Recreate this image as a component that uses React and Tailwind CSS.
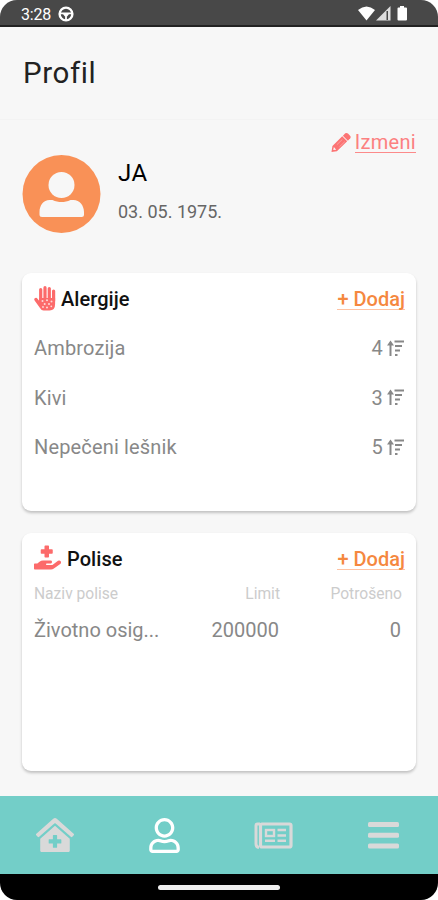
import { FaHandHoldingMedical, FaClinicMedical, FaRegUser } from 'react-icons/fa';

const allergies = [
  { name: 'Ambrozija', level: 4 },
  { name: 'Kivi', level: 3 },
  { name: 'Nepečeni lešnik', level: 5 },
];

const policies = [
  { name: 'Životno osig...', limit: 200000, spent: 0 },
];

function SortIcon() {
  return (
    <svg width="17" height="17" viewBox="0 0 17 17" fill="none" stroke="currentColor" strokeWidth="1.8">
      <path d="M3.5 16V3" strokeWidth="2" />
      <path d="M0 5.500 L3.500 .5 L7 5.500Z" fill="currentColor" stroke="none" />
      <path d="M7.500 1.500h9.500M8 6h7M8 10.500h5M8 15h2.500" />
    </svg>
  );
}

function PencilIcon() {
  return (
    <svg className="mr-[4px]" width="20" height="21" viewBox="0 0 21 21" fill="currentColor">
      <path fillRule="evenodd" d="M11.800 4 17 9.200 6.200 19.600.5 20.500 1.500 14.300ZM3 15.300 2.400 18.500 5.500 18.100Z" />
      <path d="M12.500 3.400 15 .9q1.400-1 2.800.2l2.200 2.200q1.300 1.400.2 2.800l-2.500 2.500Z" />
      <path d="M6.200 12.800 12 7.200M8.800 15.100l5.700-5.500" fill="none" stroke="#f7f7f7" strokeWidth=".6" opacity=".6" />
    </svg>
  );
}

function HandIcon() {
  return (
    <svg className="mr-[5px] mb-[2px]" width="22" height="25" viewBox="0 0 22 25">
      <g fill="none" stroke="#fc6b6b" strokeWidth="3.200" strokeLinecap="round">
        <path d="M6.700 3.500V15M11 1.700V15M15.300 2.500V15M19.600 5V15" />
      </g>
      <path d="M5.200 12H21.100v6q0 6.500-5.500 6.500H9.500Q7.500 24.500 6 22L.6 14.500q-1-1.700.7-2.500 1.300-.5 2.200.7l1.800 2.300Z" fill="#fc6b6b" />
      <g fill="#fff" opacity=".75">
        <circle cx="8.500" cy="15" r="1" />
        <circle cx="13" cy="14.300" r="1" />
        <circle cx="17.500" cy="15.500" r="1" />
        <circle cx="10.700" cy="18" r="1" />
        <circle cx="15" cy="18" r="1" />
        <circle cx="9" cy="21" r=".9" />
        <circle cx="13" cy="21.500" r="1" />
        <circle cx="17.300" cy="20.300" r=".9" />
      </g>
    </svg>
  );
}

function NewsIcon() {
  return (
    <svg width="39" height="27" viewBox="0 0 39 27" fill="none" stroke="currentColor">
      <path d="M6 2H3.500Q2 2 2 3.500V22q0 3 3 3.500" strokeWidth="3" />
      <rect x="6.500" y="2" width="30.500" height="23" rx="1.500" strokeWidth="3.200" />
      <rect x="12" y="8" width="8" height="6" strokeWidth="2.400" />
      <path d="M23.500 8h8.500M23.500 13.500h8.500M11 18.800h10M23.500 18.800h8.500" strokeWidth="2.600" />
    </svg>
  );
}

function MenuIcon() {
  return (
    <svg width="31" height="27" viewBox="0 0 31 27" fill="currentColor">
      <rect width="31" height="5" rx="1.500" />
      <rect y="10.700" width="31" height="5" rx="1.500" />
      <rect y="21.400" width="31" height="5" rx="1.500" />
    </svg>
  );
}

function StatusBar() {
  return (
    <div className="flex h-[27px] shrink-0 items-center border-b-2 border-[#222] bg-[#484848] pr-[30px] pl-[21px] text-white">
      <span className="pt-[4px] text-[16px] leading-none tracking-[-0.2px]">3:28</span>
      <svg className="mt-[2px] ml-[7px]" width="16" height="16" viewBox="0 0 16 16" fill="none" stroke="#fff">
        <circle cx="8" cy="8" r="6.4" strokeWidth="2.4" />
        <path d="M2 7.3h12M8 8v6M5.5 7.5 8 10.3l2.5-2.8" strokeWidth="1.8" />
      </svg>
      <svg className="mt-[2px] ml-auto" width="50" height="17" viewBox="0 0 50 17" fill="#fff">
        <path d="M0 5Q8.500-2 17 5L8.500 15.500Z" />
        <path d="M32.500 1v14.500H18Z" fill="#ddd" />
        <path d="M28.500 6h1.500v9h-1.500z" fill="#484848" />
        <path d="M40 2.500h2V1h4v1.500h2q1 0 1 1V14.500q0 1-1 1h-7.500q-1 0-1-1V3.500q0-1 1-1Z" />
      </svg>
    </div>
  );
}

function Avatar() {
  return (
    <svg width="79" height="78" viewBox="0 0 78 78" className="shrink-0">
      <circle cx="39" cy="39" r="39" fill="#f99157" />
      <g fill="#f7f7f7">
        <circle cx="39" cy="30" r="13" />
        <path d="M27 45h3c6 2.700 12 2.700 18 0h3c6 0 10.500 5.500 10.500 12v2.500q0 2.500-2.500 2.500H19.500q-2.500 0-2.500-2.500V57c0-6.500 4-12 10-12Z" />
      </g>
    </svg>
  );
}

function CardHeader({ icon, title }) {
  return (
    <div className="flex h-[50px] items-center pt-[2px]">
      {icon}
      <h2 className="text-[20px] font-medium tracking-[0.05px] text-[#111]">{title}</h2>
      <button className="mr-[-1px] ml-auto border-b border-[#ffc3a3] text-[20px] leading-[20px] font-medium text-[#f5883f]">+ Dodaj</button>
    </div>
  );
}

export default function App() {
  return (
    <div className="h-[900px] w-[438px] bg-white font-[Roboto,sans-serif]">
      <div className="flex h-full flex-col overflow-hidden rounded-[17px] bg-[#f7f7f7]">
        <StatusBar />

        <header className="flex h-[93px] shrink-0 items-center border-b border-[#f3f3f3] pl-[23px]">
          <h1 className="text-[29.5px] tracking-[0.6px] text-[#222]">Profil</h1>
        </header>

        <main className="flex flex-1 flex-col px-[22px]">
          <div className="mt-[9px] flex h-[26px] items-center justify-end text-[#fc7474]">
            <PencilIcon />
            <a className="border-b border-[#fc8a8a] text-[20px] leading-[20px] tracking-[0.3px] text-[#fc8080]">Izmeni</a>
          </div>

          <section className="flex h-[78px] gap-[17px]">
            <Avatar />
            <div className="pt-[3px]">
              <p className="text-[24px] leading-[30px] tracking-[0.4px] text-black">JA</p>
              <p className="mt-[12px] text-[18px] leading-[24px] text-[#666]">03. 05. 1975.</p>
            </div>
          </section>

          {/* Allergies */}
          <section className="mt-[40px] h-[238px] rounded-[9px] bg-white px-3 shadow-[0_2px_3px_rgba(0,0,0,0.22)]">
            <CardHeader icon={<HandIcon />} title="Alergije" />
            {allergies.map(a => (
              <div key={a.name} className="flex h-[49.5px] items-center pt-px text-[20px] tracking-[0.15px] text-[#888]">
                <span>{a.name}</span>
                <span className="mr-[4px] ml-auto">{a.level}</span>
                <SortIcon />
              </div>
            ))}
          </section>

          {/* Policies */}
          <section className="mt-[22px] h-[238px] rounded-[9px] bg-white px-3 shadow-[0_2px_3px_rgba(0,0,0,0.22)]">
            <CardHeader icon={<FaHandHoldingMedical size={27} className="mr-[6px] mb-[3px] text-[#fc6b6b]" />} title="Polise" />
            <div className="grid h-[22px] grid-cols-[1fr_110px_122px] items-center pr-[2px] text-[15.6px] text-[#ccc]">
              <span>Naziv polise</span>
              <span className="text-right">Limit</span>
              <span className="text-right">Potrošeno</span>
            </div>
            {policies.map(p => (
              <div key={p.name} className="grid h-[50px] grid-cols-[1fr_110px_122px] items-center pr-[3px] text-[20px] text-[#888]">
                <span>{p.name}</span>
                <span className="text-right">{p.limit}</span>
                <span className="text-right">{p.spent}</span>
              </div>
            ))}
          </section>
        </main>

        <nav className="grid h-[78px] shrink-0 grid-cols-4 items-center justify-items-center bg-[#73cec8] text-[#d9d9d9]">
          <FaClinicMedical size={38} />
          <FaRegUser size={35} className="text-white" />
          <NewsIcon />
          <MenuIcon />
        </nav>

        <div className="flex h-[26px] shrink-0 items-center justify-center bg-black">
          <div className="h-[5px] w-[122px] rounded-full bg-[#eee]" />
        </div>
      </div>
    </div>
  );
}
